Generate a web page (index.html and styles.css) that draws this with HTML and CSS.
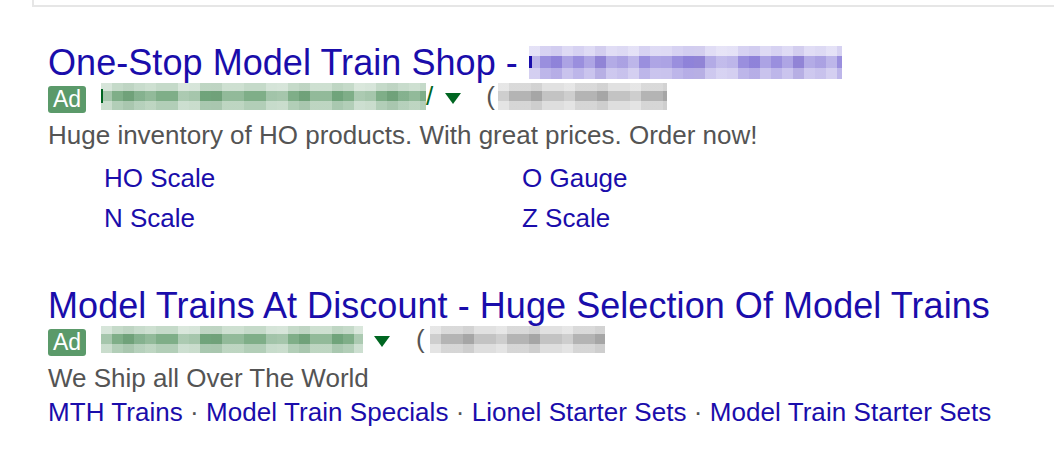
FILE: index.html
```html
<!DOCTYPE html>
<html>
    <head>
        <meta name="viewport" content="width=device-width" />
        <link rel="stylesheet" href="styles.css">
    </head>
    <body>
        <div class="top-box"></div>
        <div class="results">
            <div class="ad">
                <h3 class="ad-title"><a href="#">One-Stop Model Train Shop - <span class="blur blur-title"></span></a></h3>
                <div class="ad-url">
                    <span class="ad-badge">Ad</span>
                    <cite class="url"><span class="blur blur-green w-url1"></span>/</cite>
                    <span class="caret"></span>
                    <span class="phone">(<span class="blur blur-gray w-phone1"></span></span>
                </div>
                <div class="ad-desc">Huge inventory of HO products. With great prices. Order now!</div>
                <ul class="sitelinks">
                    <li><a href="#">HO Scale</a></li>
                    <li><a href="#">O Gauge</a></li>
                    <li><a href="#">N Scale</a></li>
                    <li><a href="#">Z Scale</a></li>
                </ul>
            </div>

            <div class="ad ad-next">
                <h3 class="ad-title"><a href="#">Model Trains At Discount - Huge Selection Of Model Trains</a></h3>
                <div class="ad-url">
                    <span class="ad-badge">Ad</span>
                    <cite class="url"><span class="blur blur-green w-url2"></span></cite>
                    <span class="caret caret-2"></span>
                    <span class="phone">(<span class="blur blur-gray w-phone2"></span></span>
                </div>
                <div class="ad-desc">We Ship all Over The World</div>
                <div class="inline-links">
                    <a href="#">MTH Trains</a> · <a href="#">Model Train Specials</a> · <a href="#">Lionel Starter Sets</a> · <a href="#">Model Train Starter Sets</a>
                </div>
            </div>
        </div>
    </body>
</html>
```

FILE: styles.css
```css
/*** base ***/
* {box-sizing: border-box;}
html, body {margin: 0; padding: 0; background: #fff;}
body {font-family: "Liberation Sans", Arial, sans-serif; color: #545454; overflow: hidden;}
a {color: #1a0dab; text-decoration: none;}
ul {list-style: none; margin: 0; padding: 0;}

/* box edge left over from the search bar area */
.top-box {margin-left: 32px; height: 7px; border-left: 2px solid #e6e6e6; border-bottom: 2px solid #e6e6e6;}

.results {padding-left: 48px; padding-top: 36px;}

/*** one ad ***/
.ad-title {margin: 0; font-size: 36px; font-weight: normal; line-height: 40px; white-space: nowrap; letter-spacing: 0.06px;}
.ad-url {display: flex; align-items: center; height: 27px; margin-top: 3px; font-size: 26px; color: #006621;}
.ad-badge {width: 38px; height: 27px; flex: none; border-radius: 3px; background: #5b9a6a; color: #fff;
    font-size: 23px; line-height: 27px; text-align: center; margin-right: 15px;}
.url {font-style: normal; display: flex; align-items: center; line-height: 27px; position: relative; top: -3px;}
.caret {width: 0; height: 0; margin: 0 25px 0 12px; border-left: 8px solid transparent; border-right: 8px solid transparent;
    border-top: 11px solid #006621; position: relative; top: -1px;}
.caret-2 {margin-left: 11px; margin-right: 26px;}
.phone {display: flex; align-items: center; color: #545454; line-height: 27px; position: relative; top: -3px;}
.ad-desc {margin-top: 7px; font-size: 26px; line-height: 30px; white-space: nowrap;}

.sitelinks {display: grid; grid-template-columns: 418px auto; padding-left: 56px; margin-top: 8px; font-size: 26px; line-height: 40px;}
.inline-links {margin-top: 4px; font-size: 26px; line-height: 30px; white-space: nowrap; letter-spacing: 0.05px;}

.ad-next {margin-top: 48px;}

/*** blurred-out parts (urls, phones, domain) ***/
.blur {display: inline-block; height: 27px;}
.blur-title {width: 313px; height: 33px; vertical-align: -4px; margin-left: 1px;
    background:
        linear-gradient(#1a0dab, #1a0dab) no-repeat 0 10px / 3px 12px,
        linear-gradient(to bottom, rgba(255,255,255,.6) 0 30%, transparent 30% 66%, rgba(255,255,255,.35) 66%),
        repeating-linear-gradient(to right, rgba(255,255,255,.35) 0 11px, transparent 11px 33px, rgba(255,255,255,.18) 33px 44px, transparent 44px 66px, rgba(40,0,120,.08) 66px 77px, rgba(255,255,255,.25) 77px 99px),
        repeating-linear-gradient(to right, transparent 0 22px, rgba(80,60,190,.15) 22px 33px, transparent 33px 55px, rgba(255,255,255,.2) 55px 66px),
        #9a8fde;}
.blur-green {
    background:
        linear-gradient(to bottom, rgba(255,255,255,.55) 0 30%, transparent 30% 65%, rgba(255,255,255,.4) 65%),
        repeating-linear-gradient(to right, rgba(255,255,255,.3) 0 11px, transparent 11px 22px, rgba(0,70,20,.12) 22px 33px, rgba(255,255,255,.15) 33px 55px, transparent 55px 77px, rgba(255,255,255,.35) 77px 88px),
        repeating-linear-gradient(to right, transparent 0 33px, rgba(0,90,30,.12) 33px 44px, transparent 44px 66px),
        #7fae88;}
.blur-gray {margin-left: 3px;
    background:
        linear-gradient(to bottom, rgba(255,255,255,.5) 0 30%, transparent 30% 65%, rgba(255,255,255,.45) 65%),
        repeating-linear-gradient(to right, rgba(255,255,255,.35) 0 11px, transparent 11px 33px, rgba(0,0,0,.08) 33px 44px, rgba(255,255,255,.2) 44px 66px),
        #b4b4b4;}
.w-url1 {width: 325px; background-image: linear-gradient(#006621, #006621), linear-gradient(to bottom, rgba(255,255,255,.55) 0 30%, transparent 30% 65%, rgba(255,255,255,.4) 65%),
        repeating-linear-gradient(to right, rgba(255,255,255,.3) 0 11px, transparent 11px 22px, rgba(0,70,20,.12) 22px 33px, rgba(255,255,255,.15) 33px 55px, transparent 55px 77px, rgba(255,255,255,.35) 77px 88px),
        repeating-linear-gradient(to right, transparent 0 33px, rgba(0,90,30,.12) 33px 44px, transparent 44px 66px);
    background-repeat: no-repeat, repeat, repeat, repeat; background-size: 2px 14px, auto, auto, auto; background-position: 0 6px, 0 0, 0 0, 0 0;}
.w-url2 {width: 262px;}
.w-phone1 {width: 169px;}
.w-phone2 {width: 175px; margin-left: 5px;}
```
